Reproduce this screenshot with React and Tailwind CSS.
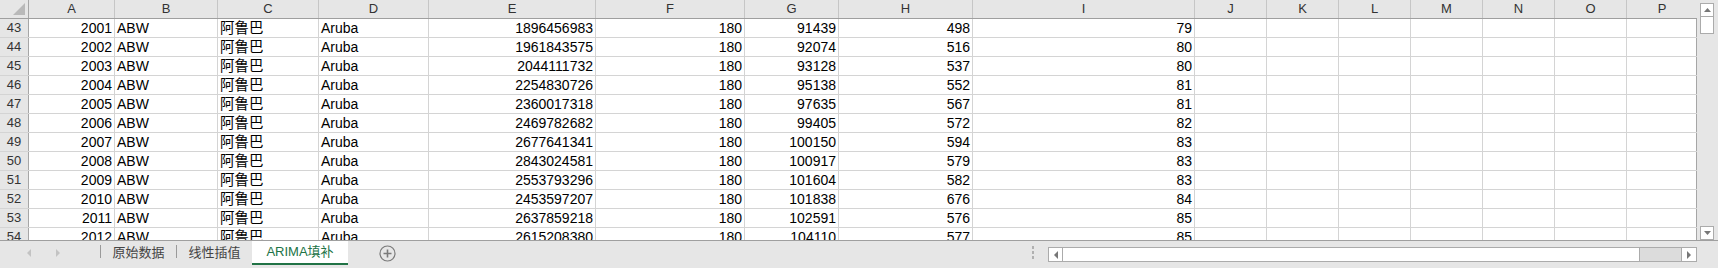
const cols = [
  { k: "A", w: "w-[86px]", align: "text-right" },
  { k: "B", w: "w-[103px]", align: "text-left" },
  { k: "C", w: "w-[101px]", align: "text-left" },
  { k: "D", w: "w-[110px]", align: "text-left" },
  { k: "E", w: "w-[167px]", align: "text-right" },
  { k: "F", w: "w-[149px]", align: "text-right" },
  { k: "G", w: "w-[94px]", align: "text-right" },
  { k: "H", w: "w-[134px]", align: "text-right" },
  { k: "I", w: "w-[222px]", align: "text-right" },
  { k: "J", w: "w-[72px]", align: "text-right" },
  { k: "K", w: "w-[72px]", align: "text-right" },
  { k: "L", w: "w-[72px]", align: "text-right" },
  { k: "M", w: "w-[72px]", align: "text-right" },
  { k: "N", w: "w-[72px]", align: "text-right" },
  { k: "O", w: "w-[72px]", align: "text-right" },
  { k: "P", w: "w-[70px]", align: "text-right" },
];

const rows = [
  [43, "2001", "1896456983", "91439", "498", "79"],
  [44, "2002", "1961843575", "92074", "516", "80"],
  [45, "2003", "2044111732", "93128", "537", "80"],
  [46, "2004", "2254830726", "95138", "552", "81"],
  [47, "2005", "2360017318", "97635", "567", "81"],
  [48, "2006", "2469782682", "99405", "572", "82"],
  [49, "2007", "2677641341", "100150", "594", "83"],
  [50, "2008", "2843024581", "100917", "579", "83"],
  [51, "2009", "2553793296", "101604", "582", "83"],
  [52, "2010", "2453597207", "101838", "676", "84"],
  [53, "2011", "2637859218", "102591", "576", "85"],
  [54, "2012", "2615208380", "104110", "577", "85"],
];

function Cell({ col, children, last }) {
  return (
    <div
      className={`${col.w} ${col.align} shrink-0 border-r ${
        last ? "border-[#a6a6a6]" : "border-[#d4d4d4]"
      } px-[2px] overflow-hidden whitespace-nowrap leading-[18px]`}
    >
      {children}
    </div>
  );
}

function Triangle({ dir }) {
  const pts = {
    up: "0,4 7,4 3.5,0",
    down: "0,0 7,0 3.5,4",
    left: "4,0 4,8 0,4",
    right: "0,0 0,8 4,4",
  }[dir];
  const w = dir === "up" || dir === "down" ? 7 : 4;
  const h = dir === "up" || dir === "down" ? 4 : 8;
  return (
    <svg width={w} height={h} viewBox={`0 0 ${w} ${h}`}>
      <polygon points={pts} fill="currentColor" />
    </svg>
  );
}

export default function App() {
  return (
    <div className="w-[1718px] h-[268px] bg-[#e6e6e6] overflow-hidden font-['Liberation_Sans','Noto_Sans_CJK_SC',sans-serif] text-black">
      <div className="flex h-[240px]">
        <div className="w-[1697px] h-[240px] overflow-hidden bg-white">
          {/* header */}
          <div className="flex h-[19px] bg-[#e6e6e6] border-b border-[#9f9f9f] text-[13px] text-[#333]">
            <div className="w-[29px] shrink-0 border-r border-[#a6a6a6] relative">
              <svg className="absolute right-[3px] bottom-[3px]" width="12" height="12" viewBox="0 0 12 12">
                <polygon points="12,0 12,12 0,12" fill="#b9b9b9" />
              </svg>
            </div>
            {cols.map((c, i) => (
              <div
                key={c.k}
                className={`${c.w} shrink-0 text-center leading-[18px] ${
                  i === cols.length - 1 ? "" : "border-r border-[#c6c6c6]"
                }`}
              >
                {c.k}
              </div>
            ))}
          </div>
          {rows.map((r) => (
            <div key={r[0]} className="flex h-[19px] border-b border-[#d4d4d4] text-[14px]">
              <div className="w-[29px] shrink-0 bg-[#e6e6e6] border-r border-[#a6a6a6] text-center text-[13px] text-[#333] leading-[18px]">
                {r[0]}
              </div>
              <Cell col={cols[0]}>{r[1]}</Cell>
              <Cell col={cols[1]}>ABW</Cell>
              <Cell col={cols[2]}>
                <span className="text-[14.5px]">阿鲁巴</span>
              </Cell>
              <Cell col={cols[3]}>Aruba</Cell>
              <Cell col={cols[4]}>{r[2]}</Cell>
              <Cell col={cols[5]}>180</Cell>
              <Cell col={cols[6]}>{r[3]}</Cell>
              <Cell col={cols[7]}>{r[4]}</Cell>
              <Cell col={cols[8]}>{r[5]}</Cell>
              {cols.slice(9).map((c, i) => (
                <Cell key={c.k} col={c} last={i === 6} />
              ))}
            </div>
          ))}
        </div>
        {/* vertical scrollbar */}
        <div className="w-[21px] flex flex-col pl-[3px] pt-[3px]">
          <div className="w-[14px] h-[14px] bg-white border border-[#ababab] flex items-center justify-center text-[#777]">
            <Triangle dir="up" />
          </div>
          <div className="w-[14px] h-[17px] bg-white border border-[#ababab] border-t-0 mt-0" />
          <div className="flex-1" />
          <div className="w-[14px] h-[14px] bg-white border border-[#ababab] flex items-center justify-center text-[#777]">
            <Triangle dir="down" />
          </div>
        </div>
      </div>

      {/* bottom bar */}
      <div className="flex h-[28px] border-t border-[#9f9f9f] text-[13px]">
        <div className="w-[100px] flex items-center text-[#c3c3c3] h-[24px]">
          <div className="ml-[27px]">
            <Triangle dir="left" />
          </div>
          <div className="ml-[25px]">
            <Triangle dir="right" />
          </div>
        </div>
        <div className="w-[1px] h-[13px] mt-[4px] bg-[#9a9a9a]" />
        <div className="w-[75px] h-[24px] flex items-center justify-center text-[#444]">原始数据</div>
        <div className="w-[1px] h-[13px] mt-[4px] bg-[#9a9a9a]" />
        <div className="w-[75px] h-[24px] flex items-center justify-center text-[#444]">线性插值</div>
        <div className="w-[96px] h-[24px] bg-white border-b-2 border-[#217346] flex items-center justify-center text-[#217346] pb-[1px]">
          ARIMA填补
        </div>
        <div className="ml-[31px] h-[24px] flex items-center">
          <svg width="17" height="17" viewBox="0 0 17 17">
            <circle cx="8.5" cy="8.5" r="7.5" fill="none" stroke="#7a7a7a" strokeWidth="1.2" />
            <path d="M8.5 4.5v8M4.5 8.5h8" stroke="#7a7a7a" strokeWidth="1.6" />
          </svg>
        </div>
        <div className="flex-1" />
        <div className="flex flex-col gap-[2px] mt-[5px] mr-[14px] w-[2px]">
          <div className="w-[2px] h-[3px] bg-[#b0b0b0]" />
          <div className="w-[2px] h-[3px] bg-[#b0b0b0]" />
          <div className="w-[2px] h-[3px] bg-[#b0b0b0]" />
        </div>
        <div className="w-[649px] h-[15px] mt-[6px] flex border border-[#ababab] bg-[#dcdcdc]">
          <div className="w-[14px] h-full bg-white border-r border-[#ababab] flex items-center justify-center text-[#777]">
            <Triangle dir="left" />
          </div>
          <div className="w-[577px] h-full bg-white border-r border-[#ababab]" />
          <div className="flex-1" />
          <div className="w-[15px] h-full bg-white border-l border-[#ababab] flex items-center justify-center text-[#777]">
            <Triangle dir="right" />
          </div>
        </div>
        <div className="w-[21px]" />
      </div>
    </div>
  );
}
